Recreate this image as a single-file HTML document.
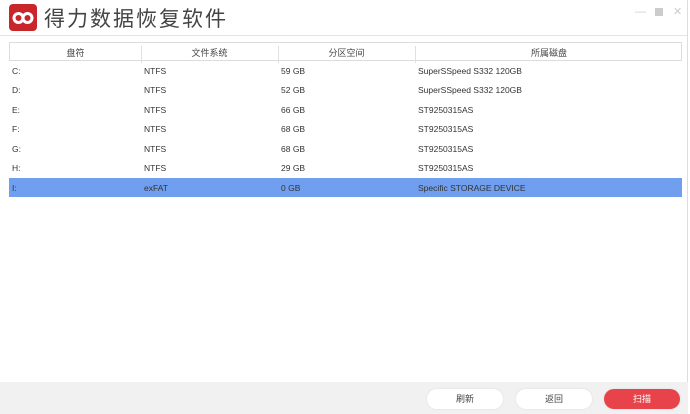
<!DOCTYPE html>
<html><head><meta charset="utf-8"><style>
*{margin:0;padding:0;box-sizing:border-box}
body{width:690px;height:414px;background:#fff;position:relative;overflow:hidden;font-family:"Liberation Sans","Noto Sans CJK SC",sans-serif;color:#333}
.logo{position:absolute;left:9px;top:4px;width:28px;height:27px;background:#c8262b;border-radius:4px}
.title{position:absolute;left:44px;top:3px;font-size:21px;color:#444;letter-spacing:2px}
.sep{position:absolute;left:0;top:35px;width:688px;height:1px;background:#e4e4e4}
.rb{position:absolute;right:2px;top:0;width:1px;height:414px;background:#ddd}
.hdr{position:absolute;left:9px;top:42px;width:673px;height:19px;border:1px solid #dcdcdc;font-size:9px;color:#444}
.hdr div{position:absolute;top:3px;text-align:center}
.vl{position:absolute;top:0;width:1px;height:17px;background:#e0e0e0}
.row{position:absolute;left:9px;width:673px;height:19px;font-size:8.5px;color:#333}
.row span{position:absolute;top:5px}
.sel{background:#6f9fee}
.bot{position:absolute;left:0;top:382px;width:688px;height:32px;background:#f1f1f1}
.btn{position:absolute;top:389px;width:76px;height:20px;border-radius:10px;background:#fff;font-size:9px;text-align:center;line-height:20px;color:#444;box-shadow:0 0 2px #ddd}
.red{background:#e8434b;color:#fff}
.wc{position:absolute;top:8px;color:#ccc;font-size:11px}
</style></head><body>
<div class="logo"><svg width="28" height="27" viewBox="0 0 28 27"><circle cx="9.5" cy="14" r="4.5" fill="none" stroke="#fff" stroke-width="3"/><circle cx="18.5" cy="14" r="4.5" fill="none" stroke="#fff" stroke-width="3"/></svg></div>
<div class="title">得力数据恢复软件</div>
<div class="wc" style="left:635px;top:6px">—</div>
<div style="position:absolute;left:655px;top:8px;width:8px;height:8px;background:#ccc"></div>
<div class="wc" style="left:673px;top:5px">✕</div>
<div class="sep"></div>
<div class="rb"></div>
<div class="hdr">
<div style="left:0;width:131px">盘符</div>
<div class="vl" style="left:131px"></div>
<div style="left:131px;width:137px">文件系统</div>
<div class="vl" style="left:268px"></div>
<div style="left:268px;width:137px">分区空间</div>
<div class="vl" style="left:405px"></div>
<div style="left:405px;width:268px">所属磁盘</div>
</div>
<div class="row" style="top:61px"><span style="left:3px">C:</span><span style="left:135px">NTFS</span><span style="left:272px">59 GB</span><span style="left:409px">SuperSSpeed S332 120GB</span></div>
<div class="row" style="top:80px"><span style="left:3px">D:</span><span style="left:135px">NTFS</span><span style="left:272px">52 GB</span><span style="left:409px">SuperSSpeed S332 120GB</span></div>
<div class="row" style="top:100px"><span style="left:3px">E:</span><span style="left:135px">NTFS</span><span style="left:272px">66 GB</span><span style="left:409px">ST9250315AS</span></div>
<div class="row" style="top:119px"><span style="left:3px">F:</span><span style="left:135px">NTFS</span><span style="left:272px">68 GB</span><span style="left:409px">ST9250315AS</span></div>
<div class="row" style="top:139px"><span style="left:3px">G:</span><span style="left:135px">NTFS</span><span style="left:272px">68 GB</span><span style="left:409px">ST9250315AS</span></div>
<div class="row" style="top:158px"><span style="left:3px">H:</span><span style="left:135px">NTFS</span><span style="left:272px">29 GB</span><span style="left:409px">ST9250315AS</span></div>
<div class="row sel" style="top:178px"><span style="left:3px">I:</span><span style="left:135px">exFAT</span><span style="left:272px">0 GB</span><span style="left:409px">Specific STORAGE DEVICE</span></div>
<div class="bot"></div>
<div class="btn" style="left:427px">刷新</div>
<div class="btn" style="left:516px">返回</div>
<div class="btn red" style="left:604px">扫描</div>
</body></html>
